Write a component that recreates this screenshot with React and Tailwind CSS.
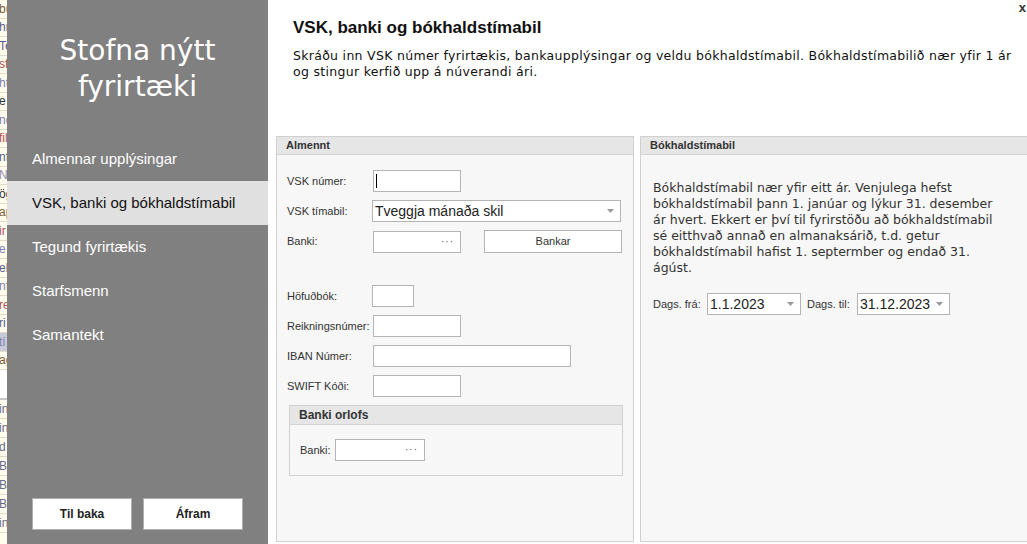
const stripRows = [
  { t: 'bú', c: 'text-[#7a5a3a]' },
  { t: 'hn', c: 'text-[#5b5b8a]' },
  { t: 'Te', c: 'text-[#5b5b8a]' },
  { t: 'sf', c: 'text-[#b05050]' },
  { t: 'ht', c: 'text-[#8080b0]' },
  { t: 'e', c: 'text-[#333]' },
  { t: 'nd', c: 'text-[#8080b0]' },
  { t: 'fil', c: 'text-[#b05050]' },
  { t: 'nf', c: 'text-[#5b5b8a]' },
  { t: 'N', c: 'text-[#9090b0]' },
  { t: 'ög', c: 'text-[#333]' },
  { t: 'ap', c: 'text-[#7a5a3a]' },
  { t: 'ir', c: 'text-[#b05050]' },
  { t: 'e', c: 'text-[#8080b0]' },
  { t: 'el', c: 'text-[#5b5b8a]' },
  { t: 'nf', c: 'text-[#8080b0]' },
  { t: 're', c: 'text-[#b05050]' },
  { t: 'ri', c: 'text-[#5b5b8a]' },
  { t: 'tí', c: 'text-[#8080b0]' },
  { t: 'ag', c: 'text-[#7a5a3a]' },
];

const stripRows2 = ['in', 'in', 'd', 'BL', 'BL', 'BL', 'in'];

const navItems = [
  'Almennar upplýsingar',
  'VSK, banki og bókhaldstímabil',
  'Tegund fyrirtækis',
  'Starfsmenn',
  'Samantekt',
];

const Ellipsis = () => (
  <span className="text-[10px] text-[#555] tracking-[1px] leading-none">···</span>
);

const Arrow = () => (
  <svg width="7" height="4" viewBox="0 0 7 4" className="shrink-0">
    <path d="M0 0h7L3.5 4z" fill="#9a9a9a" />
  </svg>
);

const Label = ({ children, className = '' }) => (
  <span className={`text-[11px] text-[#333] w-[86px] shrink-0 ${className}`}>{children}</span>
);

const Box = ({ w, children, className = '' }) => (
  <div className={`h-[22px] bg-white border border-[#b4b4b4] flex items-center ${w} ${className}`}>
    {children}
  </div>
);

const App = () => {
  return (
    <div className="flex w-[1027px] h-[544px] overflow-hidden font-['Liberation_Sans',sans-serif]">
      {/* background app peeking out */}
      <div className="w-[7px] shrink-0 bg-[#fffcee] overflow-hidden flex flex-col text-[12px] leading-none">
        {stripRows.map((r, i) => (
          <div
            key={i}
            className={`h-[18.5px] shrink-0 border-b border-[#e0dcc8] flex items-center -ml-[1px] ${r.c} ${i === 18 ? 'bg-[#c9cad9]' : ''}`}
          >
            {r.t}
          </div>
        ))}
        <div className="h-[30px] shrink-0 bg-white border-b-2 border-[#c8c8c8]" />
        {stripRows2.map((t, i) => (
          <div key={i} className="h-[19px] shrink-0 border-b border-[#e0dcc8] flex items-center text-[#6a6a8a] -ml-[1px]">
            {t}
          </div>
        ))}
      </div>

      {/* sidebar */}
      <div className="w-[261px] shrink-0 bg-[#808080] flex flex-col">
        <h1 className="mt-[33px] text-center text-white text-[28px] leading-[36px] font-['DejaVu_Sans',sans-serif]">
          Stofna nýtt
          <br />
          fyrirtæki
        </h1>
        <nav className="mt-[32px] flex flex-col">
          {navItems.map((item, i) => (
            <div
              key={item}
              className={`h-[44px] flex items-center pl-[25px] text-[15px] ${
                i === 1 ? 'bg-[#e0e0e0] text-[#111]' : 'text-white'
              }`}
            >
              {item}
            </div>
          ))}
        </nav>
        <div className="mt-auto mb-[14px] flex gap-[11px] pl-[25px]">
          <button className="w-[100px] h-[32px] bg-white border border-[#b0b0b0] text-[12px] font-bold text-[#222]">
            Til baka
          </button>
          <button className="w-[100px] h-[32px] bg-white border border-[#b0b0b0] text-[12px] font-bold text-[#222]">
            Áfram
          </button>
        </div>
      </div>

      {/* content */}
      <div className="flex-1 bg-white relative flex flex-col">
        <span className="absolute right-[1px] top-[-2px] text-[13px] font-bold text-[#333]">x</span>
        <div className="pl-[25px] pt-[17px] h-[136px]">
          <h2 className="text-[17px] font-bold text-[#111] leading-[22px]">VSK, banki og bókhaldstímabil</h2>
          <p className="mt-[9px] text-[12.5px] leading-[16px] tracking-[0.3px] text-[#111] font-['DejaVu_Sans',sans-serif]">
            Skráðu inn VSK númer fyrirtækis, bankaupplýsingar og veldu bókhaldstímabil. Bókhaldstímabilið nær yfir 1 ár og stingur kerfið upp á núverandi ári.
          </p>
        </div>

        <div className="flex-1 flex gap-[6px] pl-[8px] pb-[2px] -mr-[2px]">
          {/* Almennt */}
          <div className="w-[358px] border border-[#d0d0d0] bg-[#f7f7f7] flex flex-col">
            <div className="h-[18px] bg-[#e6e6e6] border-b border-[#d4d4d4] flex items-center pl-[9px] text-[11px] font-bold text-[#333]">
              Almennt
            </div>
            <div className="pl-[10px] pt-[15px] flex flex-col gap-[8px]">
              <div className="flex items-center">
                <Label>VSK númer:</Label>
                <Box w="w-[88px]" className="border-[#6e6e6e] pl-[2px]">
                  <span className="w-px h-[14px] bg-black" />
                </Box>
              </div>
              <div className="flex items-center">
                <Label>VSK tímabil:</Label>
                <Box w="w-[249px]" className="-ml-px justify-between pl-[2px] pr-[6px]">
                  <span className="text-[14px] text-[#222]">Tveggja mánaða skil</span>
                  <Arrow />
                </Box>
              </div>
              <div className="flex items-center">
                <Label>Banki:</Label>
                <Box w="w-[88px]" className="justify-end pr-[6px]">
                  <Ellipsis />
                </Box>
                <button className="ml-[23px] w-[138px] h-[23px] bg-white border border-[#b4b4b4] text-[11px] text-[#333]">
                  Bankar
                </button>
              </div>

              <div className="flex items-center mt-[24px]">
                <Label>Höfuðbók:</Label>
                <Box w="w-[42px]" className="-ml-px" />
              </div>
              <div className="flex items-center">
                <Label>Reikningsnúmer:</Label>
                <Box w="w-[88px]" />
              </div>
              <div className="flex items-center">
                <Label>IBAN Númer:</Label>
                <Box w="w-[198px]" />
              </div>
              <div className="flex items-center">
                <Label>SWIFT Kóði:</Label>
                <Box w="w-[88px]" />
              </div>

              <div className="w-[334px] ml-[2px] border border-[#d0d0d0] bg-[#f7f7f7]">
                <div className="h-[19px] bg-[#e6e6e6] border-b border-[#d4d4d4] flex items-center pl-[9px] text-[12px] font-bold text-[#333]">
                  Banki orlofs
                </div>
                <div className="pl-[10px] pt-[14px] pb-[14px] flex items-center">
                  <span className="text-[11px] text-[#333] w-[35px]">Banki:</span>
                  <Box w="w-[90px]" className="justify-end pr-[6px]">
                    <Ellipsis />
                  </Box>
                </div>
              </div>
            </div>
          </div>

          {/* Bókhaldstímabil */}
          <div className="flex-1 border border-[#d0d0d0] bg-[#f7f7f7] flex flex-col">
            <div className="h-[18px] bg-[#e6e6e6] border-b border-[#d4d4d4] flex items-center pl-[9px] text-[11px] font-bold text-[#333]">
              Bókhaldstímabil
            </div>
            <div className="pl-[12px] pt-[25px] pr-[10px]">
              <p className="text-[12.5px] leading-[16px] text-[#333] font-['DejaVu_Sans',sans-serif] w-[345px]">
                Bókhaldstímabil nær yfir eitt ár. Venjulega hefst bókhaldstímabil þann 1. janúar og lýkur 31. desember ár hvert. Ekkert er því til fyrirstöðu að bókhaldstímabil sé eitthvað annað en almanaksárið, t.d. getur bókhaldstímabil hafist 1. septermber og endað 31. ágúst.
              </p>
              <div className="mt-[17px] flex items-center">
                <span className="text-[11px] text-[#333] w-[54px]">Dags. frá:</span>
                <Box w="w-[94px]" className="justify-between pl-[2px] pr-[6px]">
                  <span className="text-[14px] text-[#222]">1.1.2023</span>
                  <Arrow />
                </Box>
                <span className="text-[11px] text-[#333] ml-[6px] w-[50px]">Dags. til:</span>
                <Box w="w-[93px]" className="justify-between pl-[2px] pr-[6px]">
                  <span className="text-[14px] text-[#222]">31.12.2023</span>
                  <Arrow />
                </Box>
              </div>
            </div>
          </div>
        </div>
      </div>
    </div>
  );
};

export default App;
